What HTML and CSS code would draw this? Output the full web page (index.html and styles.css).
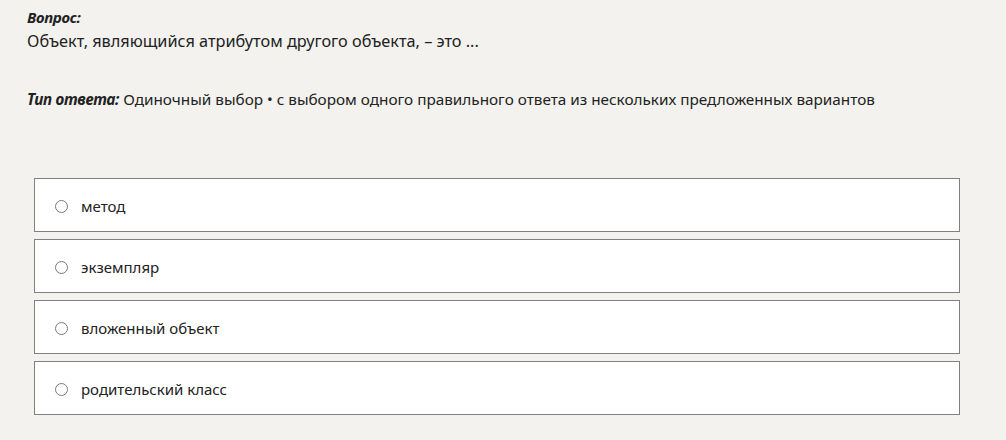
FILE: index.html
```html
<!DOCTYPE html>
<html lang="ru">
<head>
<meta charset="utf-8">
<link rel="stylesheet" href="styles.css">
</head>
<body>
<div class="page">
  <div class="label">Вопрос:</div>
  <div class="question">Объект, являющийся атрибутом другого объекта, – это ...</div>
  <div class="type"><span class="label">Тип ответа:</span> Одиночный выбор • с выбором одного правильного ответа из нескольких предложенных вариантов</div>
  <div class="options">
    <div class="option"><span class="radio"></span><span>метод</span></div>
    <div class="option"><span class="radio"></span><span>экземпляр</span></div>
    <div class="option"><span class="radio"></span><span>вложенный объект</span></div>
    <div class="option"><span class="radio"></span><span>родительский класс</span></div>
  </div>
</div>
</body>
</html>
```
FILE: styles.css
```css
html, body {
  margin: 0;
  padding: 0;
  background: #f3f2ef;
}
body {
  font-family: "Noto Sans", "Open Sans", sans-serif;
  font-size: 15px;
  color: #222;
}
.page {
  padding: 7px 46px 0 27px;
}
.label {
  font-weight: bold;
  font-style: italic;
  font-size: 15px;
  letter-spacing: -0.3px;
}
.question {
  margin-top: 2px;
  font-size: 16.3px;
  line-height: 24px;
}
.type {
  margin-top: 35px;
  font-size: 15.3px;
  line-height: 22px;
}
.type .label {
  font-size: 15.3px;
}
.options {
  margin-top: 68px;
  margin-left: 7px;
  display: flex;
  flex-direction: column;
  gap: 7px;
}
.option {
  box-sizing: content-box;
  border: 1px solid #808080;
  background: #fff;
  display: flex;
  align-items: center;
  padding: 2px 0 0 20px;
  height: 50px;
  gap: 13px;
}
.radio {
  width: 11px;
  height: 11px;
  border: 1px solid #7a7a7a;
  border-radius: 50%;
  background: #fff;
  flex: none;
}
```
